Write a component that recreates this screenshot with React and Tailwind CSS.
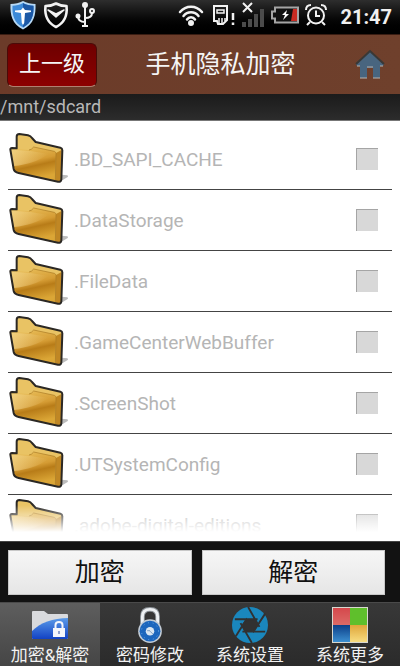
import React, { useState } from 'react';
import clsx from 'clsx';

const folders = [
    '.BD_SAPI_CACHE',
    '.DataStorage',
    '.FileData',
    '.GameCenterWebBuffer',
    '.ScreenShot',
    '.UTSystemConfig',
    '.adobe-digital-editions',
];

const StatusBar = () => (
    <div className="h-[34px] shrink-0 flex items-center justify-between bg-linear-to-b from-[#2e2e2e] to-black pl-2 pr-2 pb-1">
        <div className="flex items-center gap-1">
            {/* Shield with a T */}
            <svg width="30" height="30" viewBox="0 0 30 30">
                <path d="M15 1c3.500 2 8 3 12.500 3C28 15 26 24 15 29.500 4 24 2 15 2.500 4 7 4 11.500 3 15 1z" fill="#b7d9f4" />
                <path d="M15 3c3 1.800 7 2.700 10.500 2.800C26 15 24 23 15 27.500 6 23 4 15 4.500 5.800 8 5.700 12 4.800 15 3z" fill="#3c8ad8" />
                <path d="M15 3c3 1.800 7 2.700 10.500 2.800C26 15 24 23 15 27.500z" fill="#1b58a6" />
                <path d="M7 10.500l6-.5 2-2.500 2 2.500 6 .500v1.500l-6 1-.8 10L15 25l-1.200-2-.8-10-6-1z" fill="#fff" />
            </svg>
            {/* Shield with a check */}
            <svg width="28" height="28" viewBox="0 0 28 28" fill="none" stroke="#f2f2f2" strokeWidth="2.600" strokeLinejoin="round">
                <path d="M14 2.500c3.500 2 7 2.500 10.500 2.500C25.500 14 22 22 14 26 6 22 2.500 14 3.500 5 7 5 10.500 4.500 14 2.500z" />
                <path d="M6 9l8 7 8-7-8 4z" fill="#f2f2f2" strokeWidth="1.500" />
            </svg>
            {/* USB */}
            <svg width="22" height="28" viewBox="0 0 22 28" fill="none" stroke="#f2f2f2" strokeWidth="2">
                <path d="M11 4v20M11 21c-4 0-7-2-7-6M11 17c5 0 7-2 7-5" />
                <circle cx="11" cy="4" r="2" fill="#f2f2f2" />
                <circle cx="4" cy="15" r="1.500" fill="#f2f2f2" />
                <circle cx="18" cy="10" r="2" />
                <path d="M8 25h6" strokeWidth="2" />
            </svg>
        </div>

        <div className="flex items-center">
            {/* Wifi */}
            <svg width="26" height="24" viewBox="0 0 26 24" fill="none" stroke="#f2f2f2" strokeWidth="2.500" strokeLinecap="round">
                <path d="M2 9C8 2 18 2 24 9M5.500 13C9.500 8 16.500 8 20.500 13M9 16.500c2-3 6-3 8 0" />
                <circle cx="13" cy="20" r="2" fill="#f2f2f2" stroke="#f2f2f2" strokeWidth="2" />
            </svg>
            {/* Memory card warning */}
            <svg className="ml-2" width="24" height="24" viewBox="0 0 24 24" fill="none" stroke="#f2f2f2" strokeWidth="2">
                <path d="M2 3h13v14l-4 4H6l-1-3H2z" />
                <path d="M5 7h7v3H5z" strokeWidth="1.500" />
                <path d="M7 15v5M10 15v5M13 15v3" strokeWidth="1.500" />
                <path d="M21 10v7M21 19.500v2.500" strokeWidth="2.500" />
            </svg>
            {/* No signal */}
            <svg className="ml-1" width="26" height="26" viewBox="0 0 26 26">
                <path d="M3 1l9 9M12 1l-9 9" stroke="#f2f2f2" strokeWidth="2" />
                <path d="M2 20h4v5H2zM8 17h4v8H8zM14 12h4v13h-4zM20 7h4v18h-4z" fill="#4b4b4b" />
            </svg>
            {/* Battery */}
            <svg className="ml-1" width="30" height="20" viewBox="0 0 30 20">
                <path d="M5 2.500h23v15H5v-4H2v-7h3z" fill="#111" stroke="#a5a5a5" strokeWidth="2" />
                <path d="M23 4h4v12h-6z" fill="#c92b22" />
                <path d="M17 5l-5 5h3l-2 5 6-6h-3z" fill="#fff" />
            </svg>
            {/* Alarm */}
            <svg className="ml-1" width="24" height="24" viewBox="0 0 24 24" fill="none" stroke="#f2f2f2" strokeWidth="2">
                <circle cx="12" cy="12.500" r="8" />
                <path d="M12 7.500V13h4M2 7c0-3 2-5 5-5M22 7c0-3-2-5-5-5M6 19l-3 3M18 19l3 3" />
            </svg>
            <span className="ml-3 text-[20px] leading-6 pt-1 font-bold text-[#f0f0f0]">21:47</span>
        </div>
    </div>
);

const FolderIcon = () => (
    <svg className="shrink-0" width="62" height="54" viewBox="24 36 186 162">
        <defs>
            <linearGradient id="folderFront" x1="0" y1="0" x2="0.300" y2="1">
                <stop offset="0" stopColor="#ecc460" />
                <stop offset="0.500" stopColor="#d59c34" />
                <stop offset="0.650" stopColor="#b87c18" />
                <stop offset="1" stopColor="#dba636" />
            </linearGradient>
            <linearGradient id="folderShine" x1="0" y1="0" x2="1" y2="0">
                <stop offset="0" stopColor="#f6dc98" stopOpacity="0.600" />
                <stop offset="1" stopColor="#f6dc98" stopOpacity="0" />
            </linearGradient>
        </defs>
        <path d="M184 164l18 2q6 4-4 8l-16 10z" fill="#8f8f8f" opacity="0.600" />
        <path d="M50 87V50Q50 42 58 42L84 46Q92 48 96 54L107 66L181 83Q187 85 187 91L184 178Q183 187 174 185L56 159Q43 156 41 147L31 89z" fill="#e9c364" />
        <path d="M33 87l54 3q8-1 14-9l62 13q5 2 5 7l-2 82-110-24q-12-3-14-12z" fill="url(#folderFront)" />
        <path d="M36 112l6 26c40-4 72-14 104-36L87 92 34 89z" fill="url(#folderShine)" />
        <path d="M168 99l17-9-3 94-16-2z" fill="#c08724" />
        <path d="M87 90q8-1 14-9l62 13q5 2 5 7l-2 80" fill="none" stroke="#a87822" strokeWidth="2" />
        <path
            d="M50 85L50 50Q50 42 58 42L84 46Q92 48 96 54L107 66L181 83Q187 85 187 91L184 178Q183 187 174 185L56 159Q43 156 41 147L31 89Q31 84 36 84z"
            fill="none"
            stroke="#2b2824"
            strokeWidth="6"
            strokeLinejoin="round"
        />
    </svg>
);

const FolderRow = ({ name, checked, onToggle }) => (
    <li className="h-[61px] shrink-0 mr-2 border-b border-[#444]">
        <label className="h-full flex items-center">
            <FolderIcon />
            <span className="flex-1 pl-1 pt-[2px] text-[19px] leading-6 text-[#b5b5b5]">{name}</span>
            <input
                type="checkbox"
                checked={checked}
                onChange={onToggle}
                className="appearance-none w-[22px] h-[22px] mr-[14px] bg-[#d8d8d8] border-t border-l border-[#a5a5a5] checked:bg-[#8a8a8a]"
            />
        </label>
    </li>
);

const EncryptIcon = () => (
    <svg width="38" height="36" viewBox="0 0 38 36">
        <defs>
            <linearGradient id="encBlue" x1="0" y1="0" x2="0" y2="1">
                <stop offset="0" stopColor="#5a9ae8" />
                <stop offset="1" stopColor="#1242c4" />
            </linearGradient>
        </defs>
        <path d="M1 5q0-1 1-1h11l4 3h19q1 0 1 1v23q0 1-1 1H2q-1 0-1-1z" fill="#d9dadd" />
        <path d="M1 24C9 16 22 11 37 11v20q0 1-1 1H2q-1 0-1-1z" fill="url(#encBlue)" />
        <rect x="22" y="21" width="12" height="9" fill="#f4f6fb" />
        <path d="M24.500 21v-3q0-3 3.500-3t3.500 3v3" fill="none" stroke="#f4f6fb" strokeWidth="2" />
        <path d="M28 24v3" stroke="#6f86c0" strokeWidth="1.500" />
    </svg>
);

const PadlockIcon = () => (
    <svg width="38" height="36" viewBox="0 0 38 38">
        <path d="M11 19V10q0-7.500 8-7.500t8 7.500v9" fill="none" stroke="#8f959b" strokeWidth="5" />
        <path d="M11 19V10q0-7.500 8-7.500t8 7.500v9" fill="none" stroke="#eef1f4" strokeWidth="3" />
        <circle cx="19" cy="25.500" r="12.500" fill="#c3ccd6" />
        <circle cx="19" cy="25.500" r="11" fill="#1c66bd" />
        <circle cx="19" cy="25.500" r="9" fill="none" stroke="#66a5e4" strokeWidth="1" strokeDasharray="1 4" />
        <circle cx="19" cy="25.500" r="4.500" fill="#d9e6f2" />
        <path d="M19 25.500l3 3M16 25h3" stroke="#7c9cc0" strokeWidth="1" />
    </svg>
);

const ApertureIcon = () => (
    <svg width="40" height="36" viewBox="0 0 40 38">
        <circle cx="20" cy="19" r="19" fill="#1a87bd" />
        <path d="M16 13h9l4 6-5 7h-9l-4-7z" fill="#313131" />
        <path d="M28 13H4M30 21L18 0M23 27L36 7M12 26h24M10 17l12 21M17 12L5 31" stroke="#313131" strokeWidth="2" fill="none" />
    </svg>
);

const SquaresIcon = () => (
    <svg width="36" height="36" viewBox="0 0 36 36">
        <defs>
            <linearGradient id="sqRed" x1="0" y1="0" x2="0" y2="1">
                <stop offset="0" stopColor="#d5484c" />
                <stop offset="1" stopColor="#dc6a66" />
            </linearGradient>
            <linearGradient id="sqBlue" x1="0" y1="0" x2="0" y2="1">
                <stop offset="0" stopColor="#0c3f88" />
                <stop offset="1" stopColor="#3c8fd0" />
            </linearGradient>
            <linearGradient id="sqYellow" x1="0" y1="0" x2="0" y2="1">
                <stop offset="0" stopColor="#dfa63a" />
                <stop offset="1" stopColor="#f7dc80" />
            </linearGradient>
        </defs>
        <rect x="0" y="0" width="36" height="36" fill="#d8d8d0" />
        <rect x="1" y="1" width="17" height="17" fill="url(#sqRed)" />
        <rect x="18" y="1" width="17" height="17" fill="#5fbf2c" />
        <rect x="1" y="18" width="17" height="17" fill="url(#sqBlue)" />
        <rect x="18" y="18" width="17" height="17" fill="url(#sqYellow)" />
    </svg>
);

const tabs = [
    { label: '加密&解密', icon: EncryptIcon },
    { label: '密码修改', icon: PadlockIcon },
    { label: '系统设置', icon: ApertureIcon },
    { label: '系统更多', icon: SquaresIcon },
];

const App = () => {
    const [selected, setSelected] = useState([]);
    const [activeTab, setActiveTab] = useState(0);

    const toggle = (name) => {
        setSelected((prev) => (prev.includes(name) ? prev.filter((n) => n !== name) : [...prev, name]));
    };

    return (
        <div className="h-screen flex flex-col bg-[#111] font-[Roboto,'Noto_Sans_CJK_SC',sans-serif]">
            <StatusBar />

            {/* Title bar */}
            <header className="h-[60px] shrink-0 flex items-center pl-[7px] bg-linear-to-r from-[#6b3b29] to-[#6f402c] border-t border-[#3a1d13]">
                <button className="w-[90px] h-11 pb-[2px] rounded-md bg-linear-to-b from-[#6e0000] to-[#8d0000] border border-[#4a0b08] border-b-[#b08070] text-[22px] leading-7 text-[#f5f5f5]">
                    上一级
                </button>
                <h1 className="flex-1 text-center text-[25px] leading-8 text-[#f5f5f5]">手机隐私加密</h1>
                <button aria-label="home" className="w-14 pr-1 flex justify-center">
                    <svg width="32" height="32" viewBox="0 0 32 32">
                        <path d="M16 2l14 13-1 2h-3v12h-7V19h-6v10H6V17H3l-1-2z" fill="#48657f" />
                        <path d="M2 15L16 2l14 13" fill="none" stroke="#3a3836" strokeWidth="2" />
                        <path d="M6 29h7M19 29h7M13 18h6M3 17h3M26 17h3" stroke="#b9b5b0" strokeWidth="1" />
                    </svg>
                </button>
            </header>

            <div className="h-[27px] shrink-0 flex items-center bg-linear-to-b from-[#1b1b1b] to-[#2c2c2c] border-b border-[#777] text-[18px] leading-6 text-[#b8b8b8]">
                /mnt/sdcard
            </div>

            {/* Folder list, fades out at the bottom */}
            <main className="relative flex-1 min-h-0 overflow-hidden bg-white">
                <ul className="flex flex-col pt-2 pl-2">
                    {folders.map((name) => (
                        <FolderRow
                            key={name}
                            name={name}
                            checked={selected.includes(name)}
                            onToggle={() => toggle(name)}
                        />
                    ))}
                </ul>
                <div className="absolute inset-x-0 bottom-0 h-9 pointer-events-none bg-linear-to-b from-white/0 to-white to-75%" />
            </main>

            <div className="shrink-0 grid grid-cols-2 gap-[10px] pl-2 pr-[15px] pt-2 pb-[7px] bg-[#121212] border-t border-[#444]">
                {['加密', '解密'].map((label) => (
                    <button
                        key={label}
                        className="h-[45px] bg-linear-to-b from-[#f6f6f6] to-[#e6e6e6] border border-[#c8c8c8] text-[25px] leading-8 text-[#111]"
                    >
                        {label}
                    </button>
                ))}
            </div>

            <nav className="h-16 shrink-0 grid grid-cols-4 bg-linear-to-b from-[#383838] to-[#2b2b2b] border-t border-[#4a4a4a]">
                {tabs.map((tab, i) => (
                    <button
                        key={tab.label}
                        onClick={() => setActiveTab(i)}
                        className={clsx(
                            'flex flex-col items-center pt-1 text-[17px] leading-6 text-[#f2f2f2] whitespace-nowrap',
                            i === activeTab && 'bg-linear-to-b from-[#5e5e5e] to-[#454545]'
                        )}
                    >
                        <tab.icon />
                        <span>{tab.label}</span>
                    </button>
                ))}
            </nav>
        </div>
    );
};

export default App;
